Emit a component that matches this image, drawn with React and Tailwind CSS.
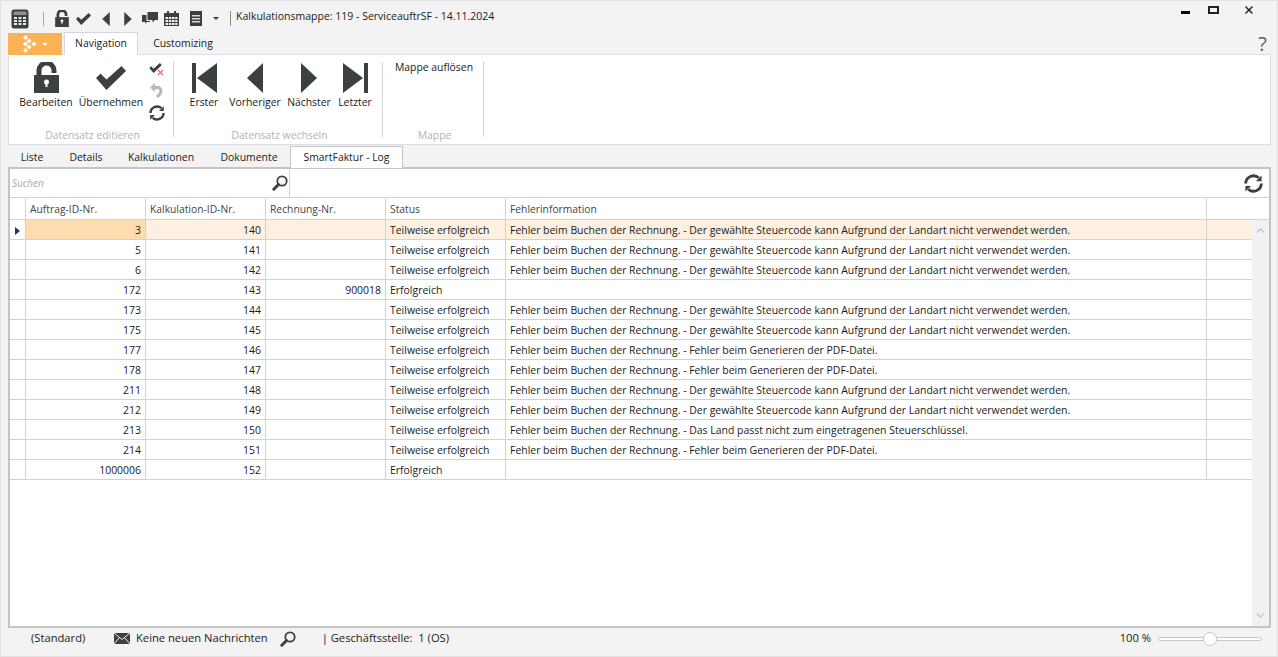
import { ChevronUp, ChevronDown, X } from "lucide-react";

const err1 = "Fehler beim Buchen der Rechnung. - Der gewählte Steuercode kann Aufgrund der Landart nicht verwendet werden.";
const err2 = "Fehler beim Buchen der Rechnung. - Fehler beim Generieren der PDF-Datei.";
const err3 = "Fehler beim Buchen der Rechnung. - Das Land passt nicht zum eingetragenen Steuerschlüssel.";
const partial = "Teilweise erfolgreich";

const rows = [
  ["3", "140", "", partial, err1],
  ["5", "141", "", partial, err1],
  ["6", "142", "", partial, err1],
  ["172", "143", "900018", "Erfolgreich", ""],
  ["173", "144", "", partial, err1],
  ["175", "145", "", partial, err1],
  ["177", "146", "", partial, err2],
  ["178", "147", "", partial, err2],
  ["211", "148", "", partial, err1],
  ["212", "149", "", partial, err1],
  ["213", "150", "", partial, err3],
  ["214", "151", "", partial, err2],
  ["1000006", "152", "", "Erfolgreich", ""],
];

const dark = "#3b4041";

const Lock = ({ w = 25, h = 31 }) => (
  <svg width={w} height={h} viewBox="0 0 25 31">
    <path d="M5 14V8.500a7.500 7.500 0 0 1 15 0V11" fill="none" stroke={dark} strokeWidth="5" />
    <path d="M0 13h25v18H0z" fill={dark} />
    <circle cx="12.500" cy="20" r="2.500" fill="#fff" />
    <path d="M11.500 20h2v5h-2z" fill="#fff" />
  </svg>
);

const Check = ({ w = 30, h = 24 }) => (
  <svg width={w} height={h} viewBox="0 0 30 24" fill={dark}>
    <path d="M0 12l4.500-4.500 6 6L25.500 0 30 5 10.500 24z" />
  </svg>
);

const TriLeft = ({ w = 16, h = 30 }) => (
  <svg width={w} height={h} viewBox="0 0 16 30" fill={dark}><path d="M16 0v30L0 15z" /></svg>
);
const TriRight = ({ w = 16, h = 30 }) => (
  <svg width={w} height={h} viewBox="0 0 16 30" fill={dark}><path d="M0 0v30l16-15z" /></svg>
);
const First = () => (
  <svg width="25" height="30" viewBox="0 0 25 30" fill={dark}><path d="M0 0h4v30H0zM25 0v30L5 15z" /></svg>
);
const Last = () => (
  <svg width="25" height="30" viewBox="0 0 25 30" fill={dark}><path d="M21 0h4v30h-4zM0 0v30l20-15z" /></svg>
);

const Calculator = () => (
  <svg width="18" height="20" viewBox="0 0 18 20">
    <rect x="0.500" y="0.500" width="17" height="19" rx="2.500" fill={dark} />
    <rect x="2.500" y="2.500" width="13" height="3.500" fill="#8d9091" />
    <path d="M3 8h3v2H3zM7.500 8h3v2h-3zM12 8h3v2h-3zM3 11h3v2H3zM7.500 11h3v2h-3zM12 11h3v2h-3zM3 14h3v2H3zM7.500 14h3v2h-3zM12 14h3v2h-3z" fill="#e8e8e8" />
  </svg>
);

const Chat = () => (
  <svg width="16" height="13" viewBox="0 0 16 13" fill={dark}>
    <path d="M5.500 0H16v8h-3l-2.500 2.500V8h-5z" />
    <path d="M0 3h4.500v6H8v1H5l-1.500 2v-2H0z" />
  </svg>
);

const CalendarIcon = () => (
  <svg width="15" height="15" viewBox="0 0 15 15" fill={dark}>
    <path d="M0 2h15v13H0z" />
    <path d="M3 0h2v3H3zM10 0h2v3h-2z" />
    <path d="M1.500 6h2.500v2H1.500zM4.800 6h2.500v2H4.800zM8 6h2.500v2H8zM11.200 6h2.300v2h-2.300zM1.500 9h2.500v2H1.500zM4.800 9h2.500v2H4.800zM8 9h2.500v2H8zM11.200 9h2.300v2h-2.300zM1.500 12h2.500v2H1.500zM4.800 12h2.500v2H4.800zM8 12h2.500v2H8zM11.200 12h2.300v2h-2.300z" fill="#f3f3f3" />
  </svg>
);

const ListIcon = () => (
  <svg width="12" height="15" viewBox="0 0 12 15" fill={dark}>
    <path d="M0 0h12v15H0z" />
    <path d="M2 4h8v1.500H2zM2 7h8v1.500H2zM2 10h8v1.500H2z" fill="#d8d8d8" />
  </svg>
);

const Logo = () => (
  <svg width="14" height="18" viewBox="0 0 14 18" fill="#fff">
    <path d="M2.500 0l2.500 2.500L2.500 5 0 2.500zM6 3.500L8.500 6 6 8.500 3.500 6zM2.500 6.500L5 9l-2.500 2.500L0 9zM11 6.500L13.500 9 11 11.500 8.500 9zM6 9.500L8.500 12 6 14.500 3.500 12zM2.500 13L5 15.500 2.500 18 0 15.500z" />
  </svg>
);

const Magnifier = () => (
  <svg width="16" height="16" viewBox="0 0 16 16" fill="none" stroke={dark}>
    <circle cx="10" cy="6" r="4.700" strokeWidth="1.800" />
    <path d="M6.500 9.500L1.800 14.200" strokeWidth="3" strokeLinecap="round" />
  </svg>
);

const Envelope = () => (
  <svg width="16" height="11" viewBox="0 0 16 11" fill={dark}>
    <path d="M0 0h16v11H0z" />
    <path d="M0 0l8 6.500L16 0M0 11l5.500-6.500M16 11l-5.500-6.500" fill="none" stroke="#f3f3f3" strokeWidth="1" />
  </svg>
);

const UndoGrey = () => (
  <svg width="14" height="15" viewBox="0 0 14 15" fill="#b9b9b9">
    <path d="M5 0L0 4.500 5 9z" />
    <path d="M4 4.500h3.500a3.500 3.500 0 0 1 3.500 3.500c0 2.500-1.500 4-4 6" fill="none" stroke="#b9b9b9" strokeWidth="3" />
  </svg>
);

const Refresh = ({ size = 16 }) => (
  <svg width={size} height={size} viewBox="0 0 20 20" fill={dark}>
    <path d="M1.800 10a8.200 8.200 0 0 1 13.700-6M18.200 10a8.200 8.200 0 0 1-13.700 6" fill="none" stroke={dark} strokeWidth="3" />
    <path d="M18.500 1.500v6h-6zM1.500 18.500v-6h6z" />
  </svg>
);

const BigButton = ({ icon, label, width, iconClass = "h-[31px]" }) => (
  <div className="flex flex-col items-center" style={{ width }}>
    <div className={`flex items-end justify-center ${iconClass}`}>{icon}</div>
    <span className="mt-px leading-4 whitespace-nowrap text-[#1a1a1a]">{label}</span>
  </div>
);

const RibbonGroup = ({ label, width, children }) => (
  <div className="flex h-[75px] shrink-0 flex-col border-r border-[#d3d3d3]" style={{ width }}>
    <div className="flex-1">{children}</div>
    <div className="-mb-[6px] pl-[3px] text-center leading-4 text-[#b3b3b3]">{label}</div>
  </div>
);

const Cell = ({ className = "", children }) => (
  <div className={`flex items-center border-r border-[#d0d3d6] px-1 pt-[2px] whitespace-nowrap ${className}`}>{children}</div>
);

function Row({ data, selected }) {
  const rowBg = selected ? "bg-[#fdf0e0]" : "";
  return (
    <div className={`flex h-5 border-b border-[#d0d3d6] text-[10.45px] ${rowBg}`}>
      <Cell className="w-4 justify-center bg-white px-0">
        {selected && (
          <svg width="5" height="8" viewBox="0 0 5 8" fill="#1f3864"><path d="M0 0l5 4-5 4z" /></svg>
        )}
      </Cell>
      <Cell className={`w-[120px] justify-end ${selected ? "bg-[#fddcb0]" : ""}`}>{data[0]}</Cell>
      <Cell className="w-[120px] justify-end">{data[1]}</Cell>
      <Cell className="w-[120px] justify-end">{data[2]}</Cell>
      <Cell className="w-[120px]">{data[3]}</Cell>
      <Cell className="w-[701px]">{data[4]}</Cell>
      <div className="flex-1" />
    </div>
  );
}

export default function App() {
  return (
    <div
      className="flex h-[657px] w-[1278px] flex-col overflow-hidden border border-[#e2e2e2] bg-[#f3f3f3] text-[10.4px] text-[#1a1a1a]"
      style={{ fontFamily: '"Open Sans", "Noto Sans", sans-serif' }}
    >
      {/* title bar */}
      <div className="flex h-[31px] shrink-0 items-center pt-1 pl-[10px]">
        <Calculator />
        <div className="mr-[11px] ml-[14px] h-[14px] w-px bg-[#a8a8a8]" />
        <div className="flex items-center">
          <div className="mr-[7px]"><Lock w={14} h={17} /></div>
          <div className="mr-[11px]"><Check w={15} h={12} /></div>
          <div className="mr-[14px]"><TriLeft w={8} h={14} /></div>
          <div className="mr-[10px]"><TriRight w={8} h={14} /></div>
          <div className="mr-[6px]"><Chat /></div>
          <div className="mr-[11px]"><CalendarIcon /></div>
          <div className="mr-[11px]"><ListIcon /></div>
          <svg width="6" height="3" viewBox="0 0 6 3" fill={dark}><path d="M0 0h6L3 3z" /></svg>
        </div>
        <div className="mr-[5px] ml-[11px] h-[15px] w-px bg-[#8a8a8a]" />
        <span className="-mt-[3px] text-[10.5px]">Kalkulationsmappe: 119 - ServiceauftrSF - 14.11.2024</span>
        <div className="-mt-[17px] ml-auto flex items-center pr-[22px]">
          <div className="mt-[5px] mr-[18px] h-[3px] w-[9px] bg-black" />
          <div className="mr-[24px] h-[8px] w-[11px] border-2 border-[#222]" />
          <X size={12} color="#222" strokeWidth={3} />
        </div>
      </div>

      {/* ribbon tabs */}
      <div className="relative z-10 flex h-[23px] shrink-0 items-end pl-[7px]">
        <div className="flex h-[22px] w-[54px] items-center justify-center gap-[5px] bg-[#fbb254]">
          <Logo />
          <svg width="6" height="3" viewBox="0 0 6 3" fill="#fff"><path d="M0 0h6L3 3z" /></svg>
        </div>
        <div className="ml-[2px] flex h-[23px] w-[74px] items-center justify-center border-x border-t border-[#d5d5de] bg-white">
          Navigation
        </div>
        <div className="ml-[8px] flex h-[22px] w-[74px] items-center justify-center">Customizing</div>
        <span className="mr-[10px] ml-auto text-[20px] leading-[22px] text-[#5a5f60]">?</span>
      </div>

      {/* ribbon */}
      <div className="mr-[6px] ml-[7px] -mt-px flex h-[91px] shrink-0 border border-[#dcdce4] bg-white pt-[7px]">
        <RibbonGroup label="Datensatz editieren" width={165}>
          <div className="flex pl-[9px]">
            <BigButton icon={<Lock />} label="Bearbeiten" width={56} />
            <BigButton icon={<Check />} label="Übernehmen" width={74} iconClass="h-[28px] mb-[3px]" />
            <div className="ml-px flex flex-col items-center">
              <div className="relative h-[21px] w-4 pt-[1px]">
                <Check w={13} h={10} />
                <X size={9} color="#f06a6a" strokeWidth={3.500} className="absolute top-[6px] left-[7px]" />
              </div>
              <UndoGrey />
              <div className="mt-[7px]"><Refresh /></div>
            </div>
          </div>
        </RibbonGroup>
        <RibbonGroup label="Datensatz wechseln" width={209}>
          <div className="flex pl-[10px]">
            <BigButton icon={<First />} label="Erster" width={40} />
            <BigButton icon={<TriLeft />} label="Vorheriger" width={62} />
            <BigButton icon={<TriRight />} label="Nächster" width={46} />
            <BigButton icon={<Last />} label="Letzter" width={46} />
          </div>
        </RibbonGroup>
        <RibbonGroup label="Mappe" width={101}>
          <div className="-mt-[3px] pl-[2px] text-center leading-4 text-[#1a1a1a]">Mappe auflösen</div>
        </RibbonGroup>
      </div>

      {/* page tabs */}
      <div className="relative z-10 -mb-px flex h-[23px] shrink-0 items-end pl-[7px]">
        {[["Liste", 48], ["Details", 60], ["Kalkulationen", 90]].map(([t, w]) => (
          <div key={t} className="flex h-[21px] items-center justify-center" style={{ width: w }}>{t}</div>
        ))}
        <div className="ml-[2px] flex h-[21px] w-[82px] items-center justify-center">Dokumente</div>
        <div className="flex h-[22px] w-[113px] items-center justify-center border-x border-t border-[#c4c4c4] bg-white">
          SmartFaktur - Log
        </div>
      </div>

      {/* grid panel */}
      <div className="mr-[6px] ml-[7px] flex h-[461px] shrink-0 flex-col border-2 border-[#c4c4c4] bg-white">
        <div className="flex h-[29px] shrink-0 border-b border-[#d0d3d6]">
          <div className="flex w-[280px] items-center justify-between border-r border-[#d0d3d6] pr-[1px] pl-[2px]">
            <span className="text-[10px] text-[#a9a9a9] italic">Suchen</span>
            <Magnifier />
          </div>
          <div className="ml-auto flex items-center pr-[6px]"><Refresh size={19} /></div>
        </div>
        <div className="flex h-[22px] shrink-0 border-b border-[#d0d3d6] text-[10.3px] text-[#444]">
          <Cell className="w-4" />
          <Cell className="w-[120px]">Auftrag-ID-Nr.</Cell>
          <Cell className="w-[120px]">Kalkulation-ID-Nr.</Cell>
          <Cell className="w-[120px]">Rechnung-Nr.</Cell>
          <Cell className="w-[120px]">Status</Cell>
          <Cell className="w-[701px]">Fehlerinformation</Cell>
        </div>
        <div className="flex min-h-0 flex-1">
          <div className="flex-1">
            {rows.map((r, i) => <Row key={r[1]} data={r} selected={i === 0} />)}
          </div>
          <div className="flex w-[17px] shrink-0 flex-col items-center justify-between bg-[#f1f1f1] py-[4px]">
            <ChevronUp size={13} color="#c0c0c0" strokeWidth={2.500} />
            <ChevronDown size={13} color="#c0c0c0" strokeWidth={2.500} />
          </div>
        </div>
      </div>

      {/* status bar */}
      <div className="flex flex-1 items-center pb-[7px] pl-[30px] text-[11.2px]">
        <span className="w-[83px]">(Standard)</span>
        <Envelope />
        <span className="ml-[6px]">Keine neuen Nachrichten</span>
        <div className="ml-[12px]"><Magnifier /></div>
        <span className="ml-[26px]">| Geschäftsstelle:&nbsp; 1 (OS)</span>
        <span className="ml-auto">100 %</span>
        <div className="relative mr-[15px] ml-[7px] h-[4px] w-[104px] rounded-sm border border-[#c8c8c8] bg-white">
          <div className="absolute top-[-6px] left-[44px] h-[14px] w-[14px] rounded-full border border-[#c8c8c8] bg-white" />
        </div>
      </div>
    </div>
  );
}
